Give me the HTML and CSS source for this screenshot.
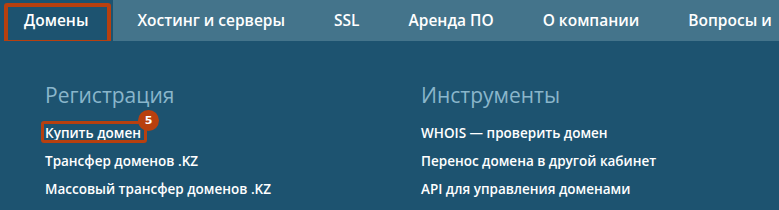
FILE: index.html
```html
<!DOCTYPE html>
<html lang="ru">
<head>
<meta charset="utf-8">
<link rel="stylesheet" href="styles.css">
</head>
<body>
<nav class="topnav">
  <a class="tab active">Домены</a>
  <a class="tab">Хостинг и серверы</a>
  <a class="tab">SSL</a>
  <a class="tab">Аренда ПО</a>
  <a class="tab">О компании</a>
  <a class="tab">Вопросы и</a>
</nav>
<div class="dropdown">
  <div class="col">
    <h2 class="col-title">Регистрация</h2>
    <ul class="links">
      <li><a class="link marked">Купить домен<span class="badge">5</span></a></li>
      <li><a class="link">Трансфер доменов .KZ</a></li>
      <li><a class="link">Массовый трансфер доменов .KZ</a></li>
    </ul>
  </div>
  <div class="col">
    <h2 class="col-title">Инструменты</h2>
    <ul class="links">
      <li><a class="link">WHOIS — проверить домен</a></li>
      <li><a class="link">Перенос домена в другой кабинет</a></li>
      <li><a class="link">API для управления доменами</a></li>
    </ul>
  </div>
</div>
</body>
</html>
```
FILE: styles.css
```css
* { box-sizing: border-box; }
html, body { margin: 0; padding: 0; }
body {
  width: 779px;
  height: 210px;
  overflow: hidden;
  background: #1d5370;
  font-family: "Open Sans", "Noto Sans", sans-serif;
  color: #fff;
}
.topnav {
  display: flex;
  height: 41px;
  background: #44748b;
  overflow: hidden;
  white-space: nowrap;
}
.tab {
  display: flex;
  align-items: center;
  flex: none;
  padding: 0 24.5px 1px 24.5px;
  font-size: 15.5px;
  font-weight: 600;
  color: #fff;
}
.tab.active {
  padding-left: 24px;
  background: #1d5370;
  position: relative;
}
.tab.active::after {
  content: "";
  position: absolute;
  left: 4px;
  right: 2px;
  top: 3px;
  bottom: -3px;
  border: 4px solid #b8400f;
  border-radius: 3px;
}
.dropdown {
  display: grid;
  grid-template-columns: 376px 1fr;
  padding: 39px 0 0 45px;
}
.col-title {
  margin: 0 0 8px;
  font-size: 21px;
  font-weight: 400;
  line-height: 30px;
  color: #8ab6cb;
}
.links {
  list-style: none;
  margin: 0;
  padding: 0;
}
.links li {
  height: 28px;
  line-height: 28px;
}
.link {
  font-size: 13.5px;
  font-weight: 600;
  color: #fff;
}
.link.marked {
  position: relative;
  display: inline-block;
  height: 28px;
}
.link.marked::before {
  content: "";
  position: absolute;
  left: -4px;
  right: -6px;
  top: 2px;
  bottom: 4px;
  border: 3px solid #b8400f;
  border-radius: 3px;
}
.badge {
  position: absolute;
  right: -18px;
  top: -9px;
  width: 21px;
  height: 21px;
  border-radius: 50%;
  background: #b8400f;
  color: #fff;
  font-family: "DejaVu Sans", sans-serif;
  font-size: 11px;
  font-weight: 700;
  line-height: 21px;
  text-align: center;
}
```
